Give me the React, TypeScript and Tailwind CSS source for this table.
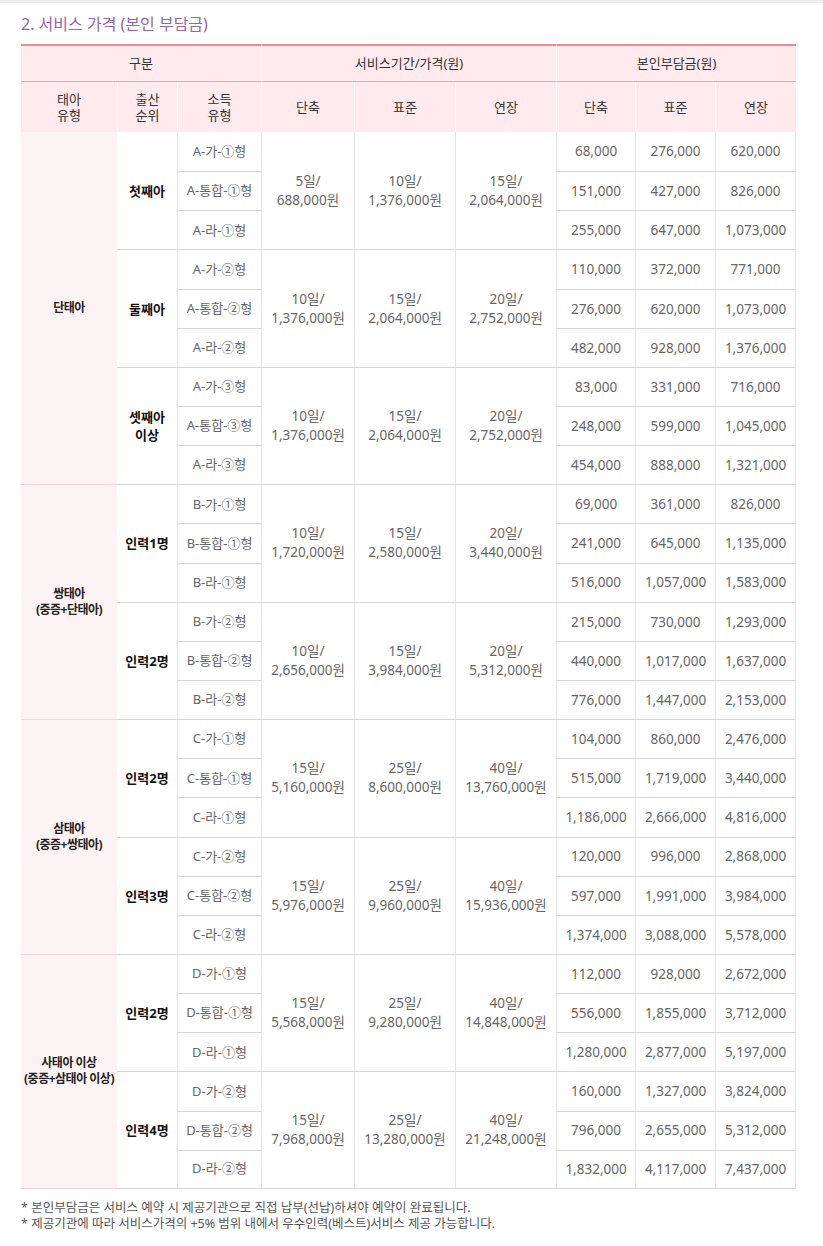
type Sub = {
  order: string[];
  code: string;
  n: string;
  periods: [string, string][];
  amounts: string[][];
};
type Group = { type: string[]; subs: Sub[] };

const groups: Group[] = [
  {
    type: ["단태아"],
    subs: [
      {
        order: ["첫째아"],
        code: "A",
        n: "①",
        periods: [["5일/", "688,000원"], ["10일/", "1,376,000원"], ["15일/", "2,064,000원"]],
        amounts: [
          ["68,000", "276,000", "620,000"],
          ["151,000", "427,000", "826,000"],
          ["255,000", "647,000", "1,073,000"],
        ],
      },
      {
        order: ["둘째아"],
        code: "A",
        n: "②",
        periods: [["10일/", "1,376,000원"], ["15일/", "2,064,000원"], ["20일/", "2,752,000원"]],
        amounts: [
          ["110,000", "372,000", "771,000"],
          ["276,000", "620,000", "1,073,000"],
          ["482,000", "928,000", "1,376,000"],
        ],
      },
      {
        order: ["셋째아", "이상"],
        code: "A",
        n: "③",
        periods: [["10일/", "1,376,000원"], ["15일/", "2,064,000원"], ["20일/", "2,752,000원"]],
        amounts: [
          ["83,000", "331,000", "716,000"],
          ["248,000", "599,000", "1,045,000"],
          ["454,000", "888,000", "1,321,000"],
        ],
      },
    ],
  },
  {
    type: ["쌍태아", "(중증+단태아)"],
    subs: [
      {
        order: ["인력1명"],
        code: "B",
        n: "①",
        periods: [["10일/", "1,720,000원"], ["15일/", "2,580,000원"], ["20일/", "3,440,000원"]],
        amounts: [
          ["69,000", "361,000", "826,000"],
          ["241,000", "645,000", "1,135,000"],
          ["516,000", "1,057,000", "1,583,000"],
        ],
      },
      {
        order: ["인력2명"],
        code: "B",
        n: "②",
        periods: [["10일/", "2,656,000원"], ["15일/", "3,984,000원"], ["20일/", "5,312,000원"]],
        amounts: [
          ["215,000", "730,000", "1,293,000"],
          ["440,000", "1,017,000", "1,637,000"],
          ["776,000", "1,447,000", "2,153,000"],
        ],
      },
    ],
  },
  {
    type: ["삼태아", "(중증+쌍태아)"],
    subs: [
      {
        order: ["인력2명"],
        code: "C",
        n: "①",
        periods: [["15일/", "5,160,000원"], ["25일/", "8,600,000원"], ["40일/", "13,760,000원"]],
        amounts: [
          ["104,000", "860,000", "2,476,000"],
          ["515,000", "1,719,000", "3,440,000"],
          ["1,186,000", "2,666,000", "4,816,000"],
        ],
      },
      {
        order: ["인력3명"],
        code: "C",
        n: "②",
        periods: [["15일/", "5,976,000원"], ["25일/", "9,960,000원"], ["40일/", "15,936,000원"]],
        amounts: [
          ["120,000", "996,000", "2,868,000"],
          ["597,000", "1,991,000", "3,984,000"],
          ["1,374,000", "3,088,000", "5,578,000"],
        ],
      },
    ],
  },
  {
    type: ["사태아 이상", "(중증+삼태아 이상)"],
    subs: [
      {
        order: ["인력2명"],
        code: "D",
        n: "①",
        periods: [["15일/", "5,568,000원"], ["25일/", "9,280,000원"], ["40일/", "14,848,000원"]],
        amounts: [
          ["112,000", "928,000", "2,672,000"],
          ["556,000", "1,855,000", "3,712,000"],
          ["1,280,000", "2,877,000", "5,197,000"],
        ],
      },
      {
        order: ["인력4명"],
        code: "D",
        n: "②",
        periods: [["15일/", "7,968,000원"], ["25일/", "13,280,000원"], ["40일/", "21,248,000원"]],
        amounts: [
          ["160,000", "1,327,000", "3,824,000"],
          ["796,000", "2,655,000", "5,312,000"],
          ["1,832,000", "4,117,000", "7,437,000"],
        ],
      },
    ],
  },
];

const kinds = ["가", "통합", "라"];

const head1 = "h-[38px] p-0 border-t-2 border-b border-t-[#ec8a93] border-b-[#f0a3aa] bg-[#ffeaed] text-[13px] font-normal text-[#333]";
const head2 = "h-[50px] p-0 bg-[#ffeaed] text-[13px] font-normal leading-[16px] text-[#333]";

function Lines({ lines }: { lines: string[] }) {
  return (
    <>
      {lines.map((l, i) => (
        <div key={i}>{l}</div>
      ))}
    </>
  );
}

export default function App() {
  const lastG = groups.length - 1;
  return (
    <div className="min-h-screen bg-white font-['Noto_Sans','Noto_Sans_CJK_KR',sans-serif]">
      <div className="h-[3px] bg-[#eeeeee]" />
      <div className="pl-[21px] pt-[11px]">
        <h2 className="text-[16px] leading-[20px] text-[#9366ad]">
          2. 서비스 가격 (본인 부담금)
        </h2>

        <table className="mt-[10px] w-[775px] table-fixed border-separate border-spacing-0 text-center">
          <colgroup>
            <col className="w-[96px]" />
            <col className="w-[60px]" />
            <col className="w-[84px]" />
            <col className="w-[93px]" />
            <col className="w-[101px]" />
            <col className="w-[101px]" />
            <col className="w-[79px]" />
            <col className="w-[80px]" />
            <col className="w-[81px]" />
          </colgroup>
          <thead>
            <tr>
              <th colSpan={3} className={head1}>구분</th>
              <th colSpan={3} className={head1 + " border-l border-l-white"}>서비스기간/가격(원)</th>
              <th colSpan={3} className={head1 + " border-l border-l-white"}>본인부담금(원)</th>
            </tr>
            <tr>
              <th className={head2}>
                <Lines lines={["태아", "유형"]} />
              </th>
              <th className={head2 + " border-l border-l-white"}>
                <Lines lines={["출산", "순위"]} />
              </th>
              <th className={head2 + " border-l border-l-white"}>
                <Lines lines={["소득", "유형"]} />
              </th>
              {["단축", "표준", "연장", "단축", "표준", "연장"].map((h, i) => (
                <th key={i} className={head2 + " border-l border-l-white"}>
                  {h}
                </th>
              ))}
            </tr>
          </thead>
          <tbody className="text-[13.5px] text-[#666]">
            {groups.map((g, gi) =>
              g.subs.map((s, si) =>
                [0, 1, 2].map((ri) => {
                  const firstBody = gi === 0 && si === 0 && ri === 0;
                  const lastSub = gi === lastG && si === g.subs.length - 1;
                  const lastRow = lastSub && ri === 2;
                  const top = firstBody ? "" : " border-t border-t-[#d6d6d6]";
                  const spanBottom = lastSub ? " border-b border-b-[#d6d6d6]" : "";
                  const rowBottom = lastRow ? " border-b border-b-[#d6d6d6]" : "";
                  const vline = " border-l border-l-[#e6e6e6]";
                  return (
                    <tr key={`${gi}-${si}-${ri}`} className="h-[39.15px]">
                      {si === 0 && ri === 0 && (
                        <td
                          rowSpan={g.subs.length * 3}
                          className={
                            "p-0 bg-[#fcf3f4] text-[12px] font-bold leading-[16px] tracking-[-0.5px] text-[#222]" +
                            (gi > 0 ? " border-t border-t-[#f4d2d6]" : "") +
                            (gi === lastG ? " border-b border-b-[#f0d4d7]" : "")
                          }
                        >
                          <Lines lines={g.type} />
                        </td>
                      )}
                      {ri === 0 && (
                        <td
                          rowSpan={3}
                          className={"p-0 text-[13px] font-bold leading-[18px] text-[#111]" + top + spanBottom}
                        >
                          <Lines lines={s.order} />
                        </td>
                      )}
                      <td className={"p-0 text-[13px]" + top + vline + rowBottom}>
                        {`${s.code}-${kinds[ri]}-${s.n}형`}
                      </td>
                      {ri === 0 &&
                        s.periods.map((p, pi) => (
                          <td
                            key={pi}
                            rowSpan={3}
                            className={"p-0 leading-[19px]" + top + vline + spanBottom}
                          >
                            <Lines lines={p} />
                          </td>
                        ))}
                      {s.amounts[ri].map((a, ai) => (
                        <td
                          key={ai}
                          className={
                            "p-0" +
                            top +
                            vline +
                            rowBottom +
                            (ai === 2 ? " border-r border-r-[#e6e6e6]" : "")
                          }
                        >
                          {a}
                        </td>
                      ))}
                    </tr>
                  );
                })
              )
            )}
          </tbody>
        </table>

        <div className="mt-[11px] text-[12.5px] leading-[16px] text-[#555]">
          <p>* 본인부담금은 서비스 예약 시 제공기관으로 직접 납부(선납)하셔야 예약이 완료됩니다.</p>
          <p>* 제공기관에 따라 서비스가격의 +5% 범위 내에서 우수인력(베스트)서비스 제공 가능합니다.</p>
        </div>
      </div>
    </div>
  );
}
